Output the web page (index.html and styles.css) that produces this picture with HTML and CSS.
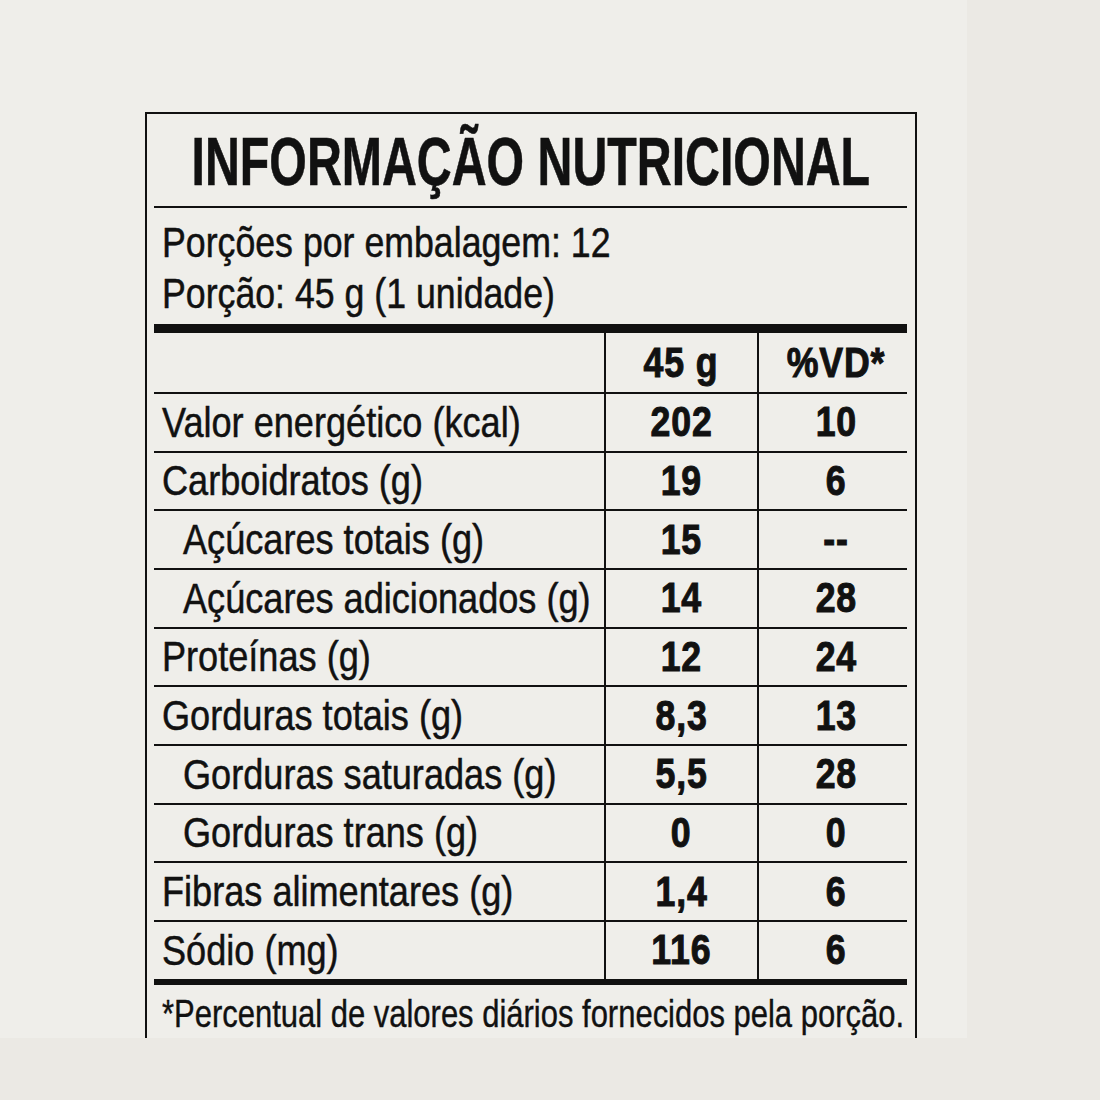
FILE: index.html
```html
<!DOCTYPE html>
<html lang="pt-BR">
<head>
<meta charset="utf-8">
<title>Informação Nutricional</title>
<link rel="stylesheet" href="styles.css">
</head>
<body>
<div class="panel">
  <div class="label">
    <h1 class="title"><span class="t">INFORMAÇÃO NUTRICIONAL</span></h1>
    <div class="serving">
      <p><span class="t">Porções por embalagem: 12</span></p>
      <p><span class="t">Porção: 45 g (1 unidade)</span></p>
    </div>
    <div class="table">
      <div class="row head">
        <div class="name"></div>
        <div class="val"><span class="t">45 g</span></div>
        <div class="val"><span class="t">%VD*</span></div>
      </div>
      <div class="row"><div class="name"><span class="t">Valor energético (kcal)</span></div><div class="val"><span class="t">202</span></div><div class="val"><span class="t">10</span></div></div>
      <div class="row"><div class="name"><span class="t">Carboidratos (g)</span></div><div class="val"><span class="t">19</span></div><div class="val"><span class="t">6</span></div></div>
      <div class="row"><div class="name sub"><span class="t">Açúcares totais (g)</span></div><div class="val"><span class="t">15</span></div><div class="val"><span class="t">--</span></div></div>
      <div class="row"><div class="name sub"><span class="t">Açúcares adicionados (g)</span></div><div class="val"><span class="t">14</span></div><div class="val"><span class="t">28</span></div></div>
      <div class="row"><div class="name"><span class="t">Proteínas (g)</span></div><div class="val"><span class="t">12</span></div><div class="val"><span class="t">24</span></div></div>
      <div class="row"><div class="name"><span class="t">Gorduras totais (g)</span></div><div class="val"><span class="t">8,3</span></div><div class="val"><span class="t">13</span></div></div>
      <div class="row"><div class="name sub"><span class="t">Gorduras saturadas (g)</span></div><div class="val"><span class="t">5,5</span></div><div class="val"><span class="t">28</span></div></div>
      <div class="row"><div class="name sub"><span class="t">Gorduras trans (g)</span></div><div class="val"><span class="t">0</span></div><div class="val"><span class="t">0</span></div></div>
      <div class="row"><div class="name"><span class="t">Fibras alimentares (g)</span></div><div class="val"><span class="t">1,4</span></div><div class="val"><span class="t">6</span></div></div>
      <div class="row last"><div class="name"><span class="t">Sódio (mg)</span></div><div class="val"><span class="t">116</span></div><div class="val"><span class="t">6</span></div></div>
    </div>
    <p class="foot"><span class="t">*Percentual de valores diários fornecidos pela porção.</span></p>
  </div>
</div>
</body>
</html>
```
FILE: styles.css
```css
html, body {
  margin: 0;
  padding: 0;
  background: #ebe9e4;
}
body {
  width: 1100px;
  height: 1100px;
  font-family: "Liberation Sans", Arial, sans-serif;
  color: #111;
}
.t {
  display: inline-block;
  white-space: nowrap;
  transform-origin: 0 50%;
  transform: scaleX(var(--sx, 0.84));
  -webkit-text-stroke: var(--stroke, 0.5px) #111;
}
.panel {
  width: 967px;
  height: 1038px;
  background: #efeeea;
  box-sizing: border-box;
  padding: 112px 0 0 145px;
  overflow: hidden;
}
.label {
  width: 772px;
  height: 926px;
  box-sizing: border-box;
  border: 2px solid #111;
  border-bottom: none;
  padding: 0 8px 0 7px;
}
.title {
  margin: 0;
  height: 94px;
  box-sizing: border-box;
  border-bottom: 2px solid #111;
  display: flex;
  justify-content: center;
  align-items: center;
  font-size: 68px;
  line-height: 1;
  font-weight: 700;
  padding-top: 2px;
  --sx: 0.71;
  --stroke: 0.6px;
}
.title .t {
  transform-origin: 50% 50%;
}
.serving {
  padding: 9px 0 0 8px;
  height: 125px;
  box-sizing: border-box;
  border-bottom: 9px solid #111;
  --sx: 0.85;
}
.serving p {
  margin: 0;
  font-size: 42px;
  line-height: 51px;
}
.table {
  border-bottom: 6px solid #111;
}
.row {
  display: grid;
  grid-template-columns: 450px 153px 150px;
  height: 58.67px;
  box-sizing: border-box;
  border-bottom: 2px solid #111;
}
.row.head {
  height: 61px;
}
.row.last {
  border-bottom: none;
  height: 56.67px;
}
.name {
  display: flex;
  align-items: center;
  padding-left: 8px;
  font-size: 43px;
  line-height: 1;
  white-space: nowrap;
  min-width: 0;
  --sx: 0.84;
}
.name.sub {
  padding-left: 29px;
}
.val {
  display: flex;
  align-items: center;
  justify-content: center;
  border-left: 2px solid #111;
  font-size: 42px;
  font-weight: 700;
  line-height: 1;
  --sx: 0.85;
  --stroke: 1px;
}
.val .t {
  transform-origin: 50% 50%;
  letter-spacing: 1px;
}
.row .val:last-child .t {
  margin-left: 6px;
}
.foot {
  margin: 0;
  padding: 6px 0 0 8px;
  font-size: 38px;
  line-height: 46px;
  white-space: nowrap;
  --sx: 0.815;
  --stroke: 0.4px;
}
```
